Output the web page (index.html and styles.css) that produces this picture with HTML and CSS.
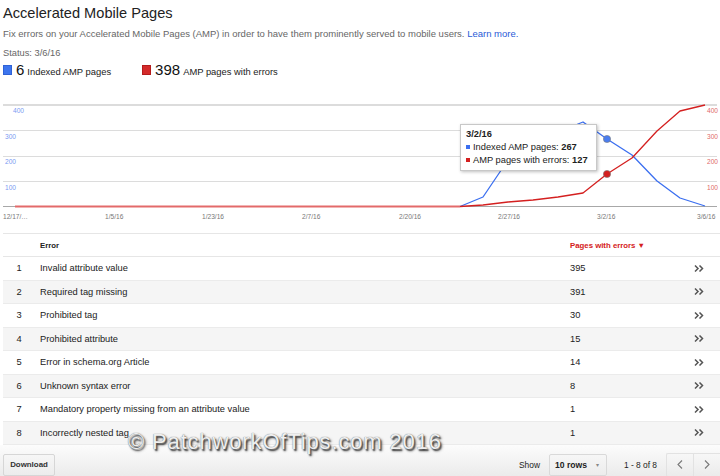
FILE: index.html
```html
<!DOCTYPE html>
<html>
<head>
<meta charset="utf-8">
<link rel="stylesheet" href="styles.css">
</head>
<body>
<div class="page">
  <div class="head">
    <h1 class="title">Accelerated Mobile Pages</h1>
    <p class="desc">Fix errors on your Accelerated Mobile Pages (AMP) in order to have them prominently served to mobile users. <a class="link" href="#">Learn more.</a></p>
    <p class="status">Status: 3/6/16</p>
    <div class="legend">
      <span class="leg"><i class="sw sw-blue"></i><b class="num">6</b><span class="lab">Indexed AMP pages</span></span>
      <span class="leg leg-red"><i class="sw sw-red"></i><b class="num">398</b><span class="lab">AMP pages with errors</span></span>
    </div>
  </div>

  <div class="chart">
    <svg class="chart-svg" width="720" height="128" viewBox="0 96 720 128" xmlns="http://www.w3.org/2000/svg">
      <g stroke="#dcdcdc" stroke-width="1">
        <line x1="3" x2="717" y1="105" y2="105" stroke-width="2"/>
        <line x1="3" x2="717" y1="130.5" y2="130.5"/>
        <line x1="3" x2="717" y1="156.5" y2="156.5"/>
        <line x1="3" x2="717" y1="181.5" y2="181.5"/>
      </g>
      <line x1="3" x2="717" y1="206.5" y2="206.5" stroke="#a8a8a8" stroke-width="1"/>
      <g font-family="Liberation Sans, Arial, sans-serif" font-size="6.6" fill="#7a9af2">
        <text x="13" y="113">400</text>
        <text x="5" y="138.5">300</text>
        <text x="5" y="164">200</text>
        <text x="5" y="189.5">100</text>
      </g>
      <g font-family="Liberation Sans, Arial, sans-serif" font-size="6.6" fill="#e06a6a" text-anchor="end">
        <text x="718" y="113">400</text>
        <text x="718" y="138.5">300</text>
        <text x="718" y="164">200</text>
        <text x="718" y="189.5">100</text>
      </g>
      <g font-family="Liberation Sans, Arial, sans-serif" font-size="6.6" fill="#777">
        <text x="3" y="218.5">12/17/…</text>
        <text x="105" y="218.5">1/5/16</text>
        <text x="202" y="218.5">1/23/16</text>
        <text x="302" y="218.5">2/7/16</text>
        <text x="399" y="218.5">2/20/16</text>
        <text x="498" y="218.5">2/27/16</text>
        <text x="597" y="218.5">3/2/16</text>
        <text x="697" y="218.5">3/6/16</text>
      </g>
      <line x1="15" x2="460" y1="206.5" y2="206.5" stroke="#e36a6a" stroke-width="2"/>
      <polyline fill="none" stroke="#3b6ff0" stroke-width="1.3" stroke-linejoin="round"
        points="460,206.5 483,197 508,160 533,146 558,133 578,124 583,122 607,139 632,155 657,181 680,198 705,206"/>
      <polyline fill="none" stroke="#d42020" stroke-width="1.3" stroke-linejoin="round"
        points="460,206.5 483,205 508,202 533,200 558,197 583,193 607,174 632,158 657,131 680,111 705,105"/>
      <circle cx="607" cy="139" r="3.6" fill="#4a7df0" stroke="#7a7a7a" stroke-opacity="0.6" stroke-width="1"/>
      <circle cx="607" cy="174" r="3.6" fill="#d42020" stroke="#7a7a7a" stroke-opacity="0.6" stroke-width="1"/>
    </svg>
    <div class="tooltip">
      <div class="tt-date">3/2/16</div>
      <div class="tt-line"><i class="tt-sq tt-blue"></i>Indexed AMP pages: <b>267</b></div>
      <div class="tt-line"><i class="tt-sq tt-red"></i>AMP pages with errors: <b>127</b></div>
    </div>
  </div>

  <div class="table">
    <div class="row row-head">
      <span class="c-num"></span>
      <span class="c-err">Error</span>
      <span class="c-cnt sort">Pages with errors <span class="arrow">▼</span></span>
      <span class="c-go"></span>
    </div>
    <div class="row"><span class="c-num">1</span><span class="c-err">Invalid attribute value</span><span class="c-cnt">395</span><span class="c-go"><svg class="chev" width="10" height="7" viewBox="0 0 10 7"><polyline points="1,0.5 4,3.5 1,6.5" fill="none" stroke="#555" stroke-width="1.5"/><polyline points="5.5,0.5 8.5,3.5 5.5,6.5" fill="none" stroke="#555" stroke-width="1.5"/></svg></span></div>
    <div class="row alt"><span class="c-num">2</span><span class="c-err">Required tag missing</span><span class="c-cnt">391</span><span class="c-go"><svg class="chev" width="10" height="7" viewBox="0 0 10 7"><polyline points="1,0.5 4,3.5 1,6.5" fill="none" stroke="#555" stroke-width="1.5"/><polyline points="5.5,0.5 8.5,3.5 5.5,6.5" fill="none" stroke="#555" stroke-width="1.5"/></svg></span></div>
    <div class="row"><span class="c-num">3</span><span class="c-err">Prohibited tag</span><span class="c-cnt">30</span><span class="c-go"><svg class="chev" width="10" height="7" viewBox="0 0 10 7"><polyline points="1,0.5 4,3.5 1,6.5" fill="none" stroke="#555" stroke-width="1.5"/><polyline points="5.5,0.5 8.5,3.5 5.5,6.5" fill="none" stroke="#555" stroke-width="1.5"/></svg></span></div>
    <div class="row alt"><span class="c-num">4</span><span class="c-err">Prohibited attribute</span><span class="c-cnt">15</span><span class="c-go"><svg class="chev" width="10" height="7" viewBox="0 0 10 7"><polyline points="1,0.5 4,3.5 1,6.5" fill="none" stroke="#555" stroke-width="1.5"/><polyline points="5.5,0.5 8.5,3.5 5.5,6.5" fill="none" stroke="#555" stroke-width="1.5"/></svg></span></div>
    <div class="row"><span class="c-num">5</span><span class="c-err">Error in schema.org Article</span><span class="c-cnt">14</span><span class="c-go"><svg class="chev" width="10" height="7" viewBox="0 0 10 7"><polyline points="1,0.5 4,3.5 1,6.5" fill="none" stroke="#555" stroke-width="1.5"/><polyline points="5.5,0.5 8.5,3.5 5.5,6.5" fill="none" stroke="#555" stroke-width="1.5"/></svg></span></div>
    <div class="row alt"><span class="c-num">6</span><span class="c-err">Unknown syntax error</span><span class="c-cnt">8</span><span class="c-go"><svg class="chev" width="10" height="7" viewBox="0 0 10 7"><polyline points="1,0.5 4,3.5 1,6.5" fill="none" stroke="#555" stroke-width="1.5"/><polyline points="5.5,0.5 8.5,3.5 5.5,6.5" fill="none" stroke="#555" stroke-width="1.5"/></svg></span></div>
    <div class="row"><span class="c-num">7</span><span class="c-err">Mandatory property missing from an attribute value</span><span class="c-cnt">1</span><span class="c-go"><svg class="chev" width="10" height="7" viewBox="0 0 10 7"><polyline points="1,0.5 4,3.5 1,6.5" fill="none" stroke="#555" stroke-width="1.5"/><polyline points="5.5,0.5 8.5,3.5 5.5,6.5" fill="none" stroke="#555" stroke-width="1.5"/></svg></span></div>
    <div class="row alt"><span class="c-num">8</span><span class="c-err">Incorrectly nested tag</span><span class="c-cnt">1</span><span class="c-go"><svg class="chev" width="10" height="7" viewBox="0 0 10 7"><polyline points="1,0.5 4,3.5 1,6.5" fill="none" stroke="#555" stroke-width="1.5"/><polyline points="5.5,0.5 8.5,3.5 5.5,6.5" fill="none" stroke="#555" stroke-width="1.5"/></svg></span></div>
  </div>

  <div class="footer">
    <button class="btn-dl">Download</button>
    <span class="spacer"></span>
    <span class="show">Show</span>
    <span class="select">10 rows <span class="sel-arrow">▾</span></span>
    <span class="range">1 - 8 of 8</span>
    <span class="pager">
      <span class="pg">
        <svg width="6" height="9" viewBox="0 0 6 9"><polyline points="5,0.5 1,4.5 5,8.5" fill="none" stroke="#777" stroke-width="1.1"/></svg>
      </span>
      <span class="pg">
        <svg width="6" height="9" viewBox="0 0 6 9"><polyline points="1,0.5 5,4.5 1,8.5" fill="none" stroke="#777" stroke-width="1.1"/></svg>
      </span>
    </span>
  </div>

  <div class="watermark">© PatchworkOfTips.com 2016</div>
</div>
</body>
</html>
```

FILE: styles.css
```css
html, body {
  margin: 0;
  padding: 0;
  background: #fff;
}
body {
  font-family: "Liberation Sans", Arial, sans-serif;
  color: #222;
  width: 720px;
  height: 476px;
  overflow: hidden;
}
.page {
  position: relative;
  width: 720px;
  height: 476px;
}
.head {
  padding-left: 3px;
}
.title {
  margin: 0;
  padding-top: 3px;
  font-size: 14.6px;
  font-weight: normal;
  line-height: 21px;
  color: #222;
}
.desc {
  margin: 3px 0 0;
  font-size: 9.5px;
  line-height: 14px;
  color: #666;
}
.link {
  color: #2a5bd7;
  text-decoration: none;
}
.status {
  margin: 5px 0 0;
  font-size: 9.3px;
  line-height: 14px;
  color: #666;
}
.legend {
  margin-top: 1px;
  display: flex;
  align-items: baseline;
  line-height: 18px;
  height: 18px;
}
.leg {
  display: flex;
  align-items: baseline;
}
.leg-red {
  margin-left: 31px;
}
.sw {
  display: inline-block;
  width: 9px;
  height: 10px;
  margin-right: 4px;
  box-sizing: border-box;
}
.sw-blue {
  background: #3d75ee;
  border: 1px solid #2f62d6;
}
.sw-red {
  background: #d42a2a;
  border: 1px solid #b41c1c;
}
.num {
  font-weight: normal;
  font-size: 15px;
  color: #111;
  margin-right: 3px;
}
.lab {
  font-size: 9.4px;
  color: #222;
}

.chart {
  position: relative;
  margin-top: 17px;
  height: 128px;
}
.chart-svg {
  display: block;
}
.tooltip {
  position: absolute;
  left: 460px;
  top: 28px;
  width: 137px;
  height: 47px;
  box-sizing: border-box;
  background: #fff;
  border: 1px solid #c8c8c8;
  box-shadow: 1px 1px 3px rgba(0, 0, 0, 0.25);
  padding: 3px 5px;
  font-size: 9.3px;
  line-height: 13px;
  color: #222;
  white-space: nowrap;
}
.tt-date {
  font-weight: bold;
}
.tt-sq {
  display: inline-block;
  width: 4px;
  height: 4px;
  margin-right: 3px;
  vertical-align: 1px;
}
.tt-blue { background: #3b6ff0; }
.tt-red { background: #d42020; }

.table {
  margin: 9px 0 0 3px;
  width: 717px;
  border-top: 1px solid #e6e6e6;
}
.row {
  display: grid;
  grid-template-columns: 32px 535px 124px 1fr;
  align-items: center;
  height: 23.5px;
  box-sizing: border-box;
  border-bottom: 1px solid #ebebeb;
  font-size: 9.3px;
  color: #222;
}
.row-head {
  height: 23px;
  font-size: 7.8px;
  font-weight: bold;
  border-bottom-color: #e6e6e6;
}
.alt {
  background: #f5f5f5;
}
.c-num {
  text-align: center;
}
.c-err {
  padding-left: 5px;
}
.sort {
  color: #d42020;
}
.arrow {
  font-size: 7.5px;
}
.c-go {
  display: flex;
  align-items: center;
}
.chev {
  display: block;
}

.footer {
  display: flex;
  align-items: center;
  box-sizing: border-box;
  height: 31px;
  padding: 8px 0 0 3px;
  background: linear-gradient(#fcfcfc, #ebebeb);
  font-size: 8.4px;
  color: #222;
}
.btn-dl {
  height: 22px;
  width: 52px;
  padding: 0;
  font-family: "Liberation Sans", Arial, sans-serif;
  font-size: 7.9px;
  font-weight: bold;
  color: #333;
  background: linear-gradient(#f6f6f6, #ececec);
  border: 1px solid #d6d6d6;
  border-radius: 2px;
}
.spacer {
  flex: 1;
}
.show {
  margin-right: 9px;
}
.select {
  display: flex;
  align-items: center;
  box-sizing: border-box;
  width: 58px;
  height: 22px;
  padding-left: 5px;
  background: linear-gradient(#f6f6f6, #ececec);
  border: 1px solid #d9d9d9;
  border-radius: 2px;
  font-size: 8.6px;
  font-weight: bold;
  color: #222;
}
.sel-arrow {
  margin-left: auto;
  margin-right: 7px;
  font-size: 6px;
  color: #888;
  font-weight: normal;
}
.range {
  margin-left: 17px;
  margin-right: 9px;
}
.pager {
  display: flex;
  height: 22px;
  border: 1px solid #e2e2e2;
  border-right: 0;
  border-radius: 2px 0 0 2px;
}
.pg {
  width: 26px;
  display: flex;
  align-items: center;
  justify-content: center;
}
.pg + .pg {
  border-left: 1px solid #e2e2e2;
}

.watermark {
  position: absolute;
  left: 128px;
  top: 431px;
  font-size: 22px;
  line-height: 22px;
  letter-spacing: 0.85px;
  color: #efefef;
  white-space: nowrap;
  text-shadow: 0 0 1px #555, 1.5px 1.5px 1.5px #444, 2px 2px 3px rgba(0, 0, 0, 0.35);
}
```
